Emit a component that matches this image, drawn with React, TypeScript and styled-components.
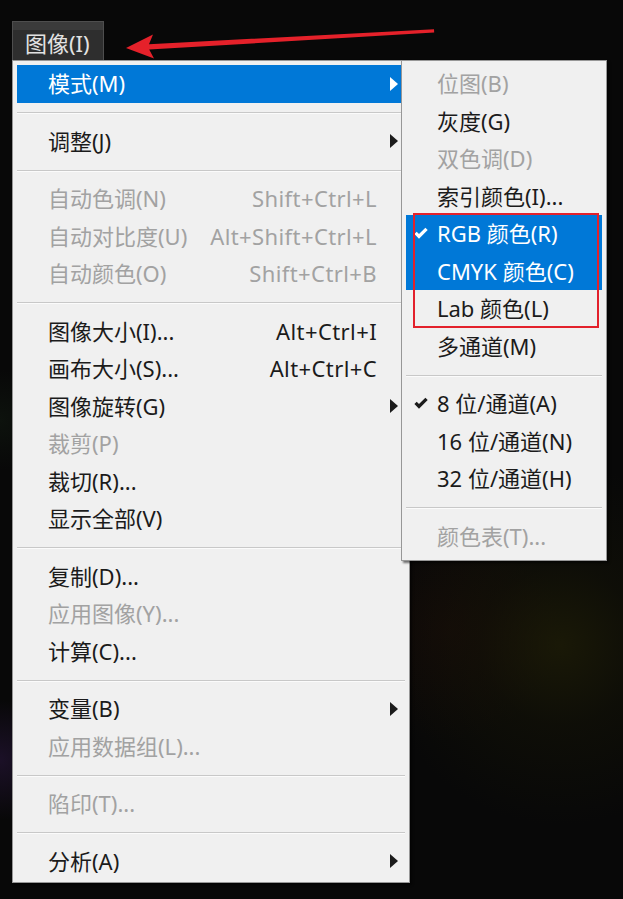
import React from "react";
import styled, { createGlobalStyle } from "styled-components";

type Item = {
  label: string;
  shortcut?: string;
  disabled?: boolean;
  sub?: boolean;
  active?: boolean;
  checked?: boolean;
};
type Entry = Item | "sep";

const imageMenu: Entry[] = [
  { label: "模式(M)", sub: true, active: true },
  "sep",
  { label: "调整(J)", sub: true },
  "sep",
  { label: "自动色调(N)", shortcut: "Shift+Ctrl+L", disabled: true },
  { label: "自动对比度(U)", shortcut: "Alt+Shift+Ctrl+L", disabled: true },
  { label: "自动颜色(O)", shortcut: "Shift+Ctrl+B", disabled: true },
  "sep",
  { label: "图像大小(I)...", shortcut: "Alt+Ctrl+I" },
  { label: "画布大小(S)...", shortcut: "Alt+Ctrl+C" },
  { label: "图像旋转(G)", sub: true },
  { label: "裁剪(P)", disabled: true },
  { label: "裁切(R)..." },
  { label: "显示全部(V)" },
  "sep",
  { label: "复制(D)..." },
  { label: "应用图像(Y)...", disabled: true },
  { label: "计算(C)..." },
  "sep",
  { label: "变量(B)", sub: true },
  { label: "应用数据组(L)...", disabled: true },
  "sep",
  { label: "陷印(T)...", disabled: true },
  "sep",
  { label: "分析(A)", sub: true },
];

const modeMenu: Entry[] = [
  { label: "位图(B)", disabled: true },
  { label: "灰度(G)" },
  { label: "双色调(D)", disabled: true },
  { label: "索引颜色(I)..." },
  { label: "RGB 颜色(R)", checked: true, active: true },
  { label: "CMYK 颜色(C)", active: true },
  { label: "Lab 颜色(L)" },
  { label: "多通道(M)" },
  "sep",
  { label: "8 位/通道(A)", checked: true },
  { label: "16 位/通道(N)" },
  { label: "32 位/通道(H)" },
  "sep",
  { label: "颜色表(T)...", disabled: true },
];

const GlobalStyle = createGlobalStyle`
  html, body {
    margin: 0;
    padding: 0;
    background: #070707;
  }
  body {
    font-family: "Noto Sans", "Noto Sans CJK SC", sans-serif;
  }
`;

const Page = styled.div`
  position: relative;
  width: 623px;
  min-height: 899px;
  box-sizing: border-box;
  padding: 21px 0 0 12px;
  overflow: hidden;
  background:
    radial-gradient(circle at 560px 645px, rgba(40, 38, 6, 0.55) 0, rgba(26, 25, 6, 0.35) 80px, transparent 180px),
    radial-gradient(circle at 450px 630px, rgba(32, 12, 8, 0.4) 0, transparent 110px),
    radial-gradient(circle at 0px 760px, rgba(40, 22, 60, 0.6) 0, transparent 60px),
    radial-gradient(circle at 0px 420px, rgba(18, 28, 18, 0.5) 0, transparent 50px),
    #080808;
`;

const TitleButton = styled.div`
  width: 92px;
  height: 39px;
  box-sizing: border-box;
  padding: 5px 0 0 12px;
  line-height: 33px;
  font-size: 22px;
  color: #e2e2e2;
  background: linear-gradient(#3b3b3b 0 8px, #2e2e2e 8px);
  border: 1px solid #4e4e4e;
  border-bottom: none;
`;

const MenuWrap = styled.div`
  position: relative;
  width: 398px;
`;

const Panel = styled.div`
  width: 398px;
  box-sizing: border-box;
  padding: 4px 0 2px;
  background: #f0f0f0;
  border: 1px solid #979797;
  box-shadow: 2px 2px 2px rgba(0, 0, 0, 0.55);
  font-size: 22px;
`;

const SubPanel = styled(Panel)`
  position: absolute;
  left: 389px;
  top: 0;
  width: 206px;
  padding-bottom: 5px;
  z-index: 2;
`;

const Row = styled.div<{ $active?: boolean; $disabled?: boolean }>`
  display: grid;
  grid-template-columns: 31px 1fr auto 28px;
  align-items: center;
  height: 37.5px;
  margin: 0 4px;
  white-space: nowrap;
  background: ${({ $active }) => ($active ? "#0078d7" : "transparent")};
  color: ${({ $active, $disabled }) =>
    $active ? "#ffffff" : $disabled ? "#a2a2a2" : "#1b1b1b"};
`;

const CheckCell = styled.span`
  display: flex;
  justify-content: center;
  align-items: center;
  padding-right: 2px;
`;

const Label = styled.span`
  line-height: 37.5px;
`;

const Shortcut = styled.span`
  line-height: 37.5px;
  letter-spacing: 0.4px;
`;

const ArrowCell = styled.span`
  display: flex;
  align-items: center;
  padding-left: 13px;
`;

const Sep = styled.div`
  height: 20px;
  margin: 0 4px;
  display: flex;
  align-items: center;
  &::before {
    content: "";
    flex: 1;
    height: 1px;
    background: #c8c8c8;
    box-shadow: 0 1px 0 #fbfbfb;
  }
`;

const RedFrame = styled.div`
  position: absolute;
  left: 11px;
  top: 152px;
  width: 186px;
  height: 115px;
  box-sizing: border-box;
  border: 2px solid #e3212b;
  pointer-events: none;
`;

const Annotation = styled.svg`
  position: absolute;
  left: 0;
  top: 0;
  pointer-events: none;
`;

const CheckIcon = () => (
  <svg width="14" height="13" viewBox="0 0 14 12">
    <path d="M0.4 6.6 L2.7 4.3 L5 6.6 L11.4 0.2 L13.7 2.4 L5 11.2 Z" fill="currentColor" />
  </svg>
);

const SubArrow = () => (
  <svg width="8" height="14" viewBox="0 0 8 14">
    <polygon points="0,0 8,7 0,14" fill="currentColor" />
  </svg>
);

const MenuList = ({ entries }: { entries: Entry[] }) => (
  <>
    {entries.map((e, i) =>
      e === "sep" ? (
        <Sep key={i} />
      ) : (
        <Row key={i} $active={e.active} $disabled={e.disabled}>
          <CheckCell>{e.checked && <CheckIcon />}</CheckCell>
          <Label>{e.label}</Label>
          <Shortcut>{e.shortcut}</Shortcut>
          <ArrowCell>{e.sub && <SubArrow />}</ArrowCell>
        </Row>
      )
    )}
  </>
);

export default function App() {
  return (
    <Page>
      <GlobalStyle />
      <TitleButton>图像(I)</TitleButton>
      <MenuWrap>
        <Panel>
          <MenuList entries={imageMenu} />
        </Panel>
        <SubPanel>
          <MenuList entries={modeMenu} />
          <RedFrame />
        </SubPanel>
      </MenuWrap>
      <Annotation width="623" height="70" viewBox="0 0 623 70">
        <polygon
          points="126,48 153,34.5 149,44.2 434,29.2 434.2,32.6 149.2,49.6 154,58.5"
          fill="#e5212a"
        />
      </Annotation>
    </Page>
  );
}
